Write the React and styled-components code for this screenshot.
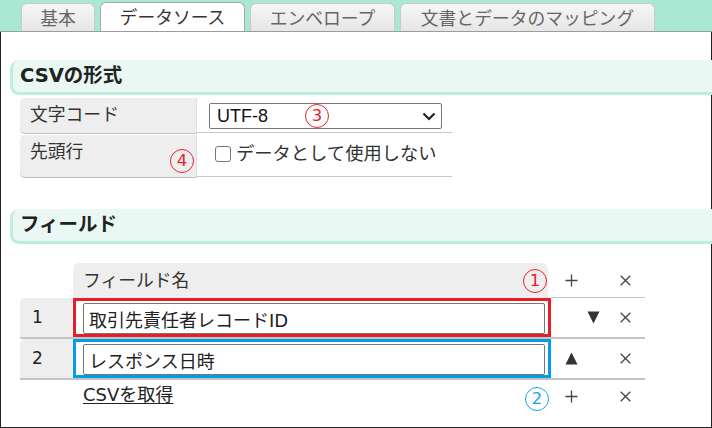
import React from "react";
import styled, { createGlobalStyle } from "styled-components";

const GlobalStyle = createGlobalStyle`
  html, body {
    margin: 0;
    padding: 0;
    background: #fff;
  }
  body {
    font-family: "DejaVu Sans", "Noto Sans CJK JP", sans-serif;
    color: #333;
  }
`;

const Page = styled.div`
  width: 712px;
  height: 428px;
  display: flex;
  flex-direction: column;
  overflow: hidden;
`;

const TabBar = styled.div`
  flex: none;
  height: 31px;
  background: #a9e9d4;
  border-bottom: 1px solid #9c9c9c;
  display: flex;
  align-items: flex-end;
  gap: 5px;
  padding-left: 21px;
`;

const Tab = styled.div`
  width: ${(p) => p.$w}px;
  height: ${(p) => (p.$active ? 29 : 28)}px;
  box-sizing: border-box;
  border: 1px solid ${(p) => (p.$active ? "#a9a9a9" : "#cacaca")};
  border-bottom: none;
  border-radius: 6px 6px 0 0;
  background: ${(p) => (p.$active ? "#fff" : "linear-gradient(#f6f6f6, #e6e6e6)")};
  color: ${(p) => (p.$active ? "#333" : "#666")};
  font-family: "Noto Sans CJK JP", sans-serif;
  font-size: 17.8px;
  line-height: 26px;
  text-align: center;
`;

const Content = styled.div`
  flex: 1;
  border: 1px solid #222;
  border-top: none;
  padding: 28px 0 0 9px;
`;

const SectionHeader = styled.h2`
  margin: ${(p) => p.$top || 0}px -1px 0 0;
  height: 35px;
  box-sizing: border-box;
  background: #eaf8f3;
  border-left: 3px solid #bdeedd;
  border-bottom: 3px solid #bdeedd;
  border-radius: 9px 0 0 9px;
  padding-left: 7px;
  font-size: 19.5px;
  font-weight: bold;
  color: #222;
  line-height: 32px;
`;

const FormTable = styled.div`
  margin: 3px 0 0 10px;
  width: 432px;
  display: flex;
  flex-direction: column;
  gap: 2px;
`;

const FormRow = styled.div`
  display: grid;
  grid-template-columns: 177px 255px;
  height: ${(p) => p.$h}px;
`;

const FormLabel = styled.div`
  position: relative;
  background: #eeeeee;
  border-radius: 5px 0 0 5px;
  border-right: 1px solid #dedede;
  box-shadow: 0 1px 0 #c2c2c2;
  padding: 4px 10px 0;
  font-size: 17.8px;
  line-height: 26px;
  color: #333;
`;

const FormValue = styled.div`
  border-bottom: 1px solid #c8c8c8;
  padding: ${(p) => p.$pad};
`;

const SelectWrap = styled.div`
  position: relative;
  width: 233px;
  height: 26px;
`;

const Select = styled.select`
  appearance: none;
  width: 100%;
  height: 100%;
  box-sizing: border-box;
  border: 1px solid #767676;
  border-radius: 2px;
  background: #fff;
  padding: 0 0 0 7px;
  font-family: "Liberation Sans", sans-serif;
  font-size: 18px;
  color: #111;
`;

const Chevron = styled.svg`
  position: absolute;
  right: 6px;
  top: 9px;
  pointer-events: none;
`;

const CheckLabel = styled.label`
  display: flex;
  align-items: center;
  gap: 5px;
  font-size: 18.3px;
  line-height: 26px;
  color: #333;
`;

const Check = styled.input`
  appearance: none;
  margin: 0;
  width: 16px;
  height: 16px;
  box-sizing: border-box;
  border: 1.5px solid #777;
  border-radius: 3px;
  background: #fff;
`;

const Mark = styled.span`
  position: absolute;
  left: ${(p) => p.$x}px;
  top: ${(p) => p.$y}px;
  width: 24px;
  height: 24px;
  box-sizing: border-box;
  border: 1.3px solid ${(p) => p.$color};
  border-radius: 50%;
  color: ${(p) => p.$color};
  font-family: "DejaVu Sans", sans-serif;
  font-size: 16.5px;
  line-height: 22px;
  text-align: center;
`;

const FieldTable = styled.div`
  margin: 19px 0 0 10px;
  width: 625px;
`;

const GridRow = styled.div`
  display: grid;
  grid-template-columns: 53px 478px 54px 40px;
  height: ${(p) => p.$h}px;
  box-sizing: border-box;
  border-bottom: ${(p) => (p.$line ? "2px solid #c4c4c4" : "none")};
`;

const NameHead = styled.div`
  position: relative;
  margin-right: 3px;
  background: #eeeeee;
  border-radius: 6px 6px 0 0;
  padding-left: 10px;
  font-size: 17.8px;
  line-height: 35px;
  color: #333;
`;

const HeadSide = styled.div`
  display: flex;
  align-items: center;
  justify-content: ${(p) => (p.$center ? "center" : "flex-start")};
  padding-left: ${(p) => (p.$center ? 0 : 9)}px;
  border-bottom: 1px solid #c4c4c4;
`;

const NumCell = styled.div`
  margin-right: 1px;
  background: #eeeeee;
  border-radius: 5px 0 0 0;
  padding-left: 12px;
  font-size: 17px;
  line-height: 39px;
  color: #222;
`;

const NameCell = styled.div`
  box-sizing: border-box;
  border: 3px solid ${(p) => p.$color};
  padding: 2px 3px 0 7px;
`;

const TextInput = styled.input`
  display: block;
  width: 100%;
  height: 31px;
  box-sizing: border-box;
  margin: 0;
  border: 1px solid #767676;
  border-radius: 2px;
  padding: 0 5px;
  font-family: "DejaVu Sans", "Noto Sans CJK JP", sans-serif;
  font-size: 18px;
  color: #222;
  background: #fff;
`;

const Side = styled.div`
  display: flex;
  align-items: center;
  justify-content: ${(p) => (p.$center ? "center" : "flex-start")};
  padding-left: ${(p) => (p.$center ? 0 : 9)}px;
`;

const Slot = styled.span`
  width: 22px;
  display: flex;
  justify-content: center;
  align-items: center;
`;

const FootName = styled.div`
  position: relative;
  padding-left: 10px;
  line-height: 30px;
`;

const Link = styled.a`
  font-size: 18px;
  color: #222;
  text-decoration: underline;
  text-underline-offset: 2px;
`;

const Plus = () => (
  <svg width="13" height="13" viewBox="0 0 13 13">
    <path d="M6.5 0.5v12M0.5 6.5h12" stroke="#444" strokeWidth="1.3" />
  </svg>
);

const Times = () => (
  <svg width="11" height="11" viewBox="0 0 11 11">
    <path d="M0.7 0.7l9.6 9.6M10.3 0.7l-9.6 9.6" stroke="#444" strokeWidth="1.3" />
  </svg>
);

const Down = () => (
  <svg width="13" height="13" viewBox="0 0 13 13">
    <path d="M0.5 0.5h12l-6 12z" fill="#333" />
  </svg>
);

const Up = () => (
  <svg width="13" height="13" viewBox="0 0 13 13">
    <path d="M0.5 12.5h12l-6-12z" fill="#333" />
  </svg>
);

const RED = "#e8222b";
const BLUE = "#1aa3e8";

const tabs = [
  { label: "基本", w: 74 },
  { label: "データソース", w: 145, active: true },
  { label: "エンベロープ", w: 145 },
  { label: "文書とデータのマッピング", w: 255 },
];

const fields = [
  { no: 1, name: "取引先責任者レコードID", color: "#e81e26", arrow: "down" },
  { no: 2, name: "レスポンス日時", color: "#00a0e9", arrow: "up" },
];

export default function App() {
  return (
    <>
      <GlobalStyle />
      <Page>
        <TabBar>
          {tabs.map((t) => (
            <Tab key={t.label} $w={t.w} $active={t.active}>
              {t.label}
            </Tab>
          ))}
        </TabBar>
        <Content>
          <SectionHeader>CSVの形式</SectionHeader>
          <FormTable>
            <FormRow $h={35}>
              <FormLabel>文字コード</FormLabel>
              <FormValue $pad="5px 0 0 12px">
                <SelectWrap>
                  <Select defaultValue="UTF-8">
                    <option>UTF-8</option>
                    <option>Shift_JIS</option>
                  </Select>
                  <Chevron width="14" height="9" viewBox="0 0 14 9">
                    <path d="M1.5 1.5l5.5 5.5 5.5-5.5" fill="none" stroke="#222" strokeWidth="2.2" />
                  </Chevron>
                  <Mark $x={96} $y={1} $color={RED}>3</Mark>
                </SelectWrap>
              </FormValue>
            </FormRow>
            <FormRow $h={42}>
              <FormLabel>
                先頭行
                <Mark $x={150} $y={14} $color={RED}>4</Mark>
              </FormLabel>
              <FormValue $pad="6px 0 0 18px">
                <CheckLabel>
                  <Check type="checkbox" />
                  データとして使用しない
                </CheckLabel>
              </FormValue>
            </FormRow>
          </FormTable>

          <SectionHeader $top={32}>フィールド</SectionHeader>
          <FieldTable>
            <GridRow $h={35}>
              <div />
              <NameHead>
                フィールド名
                <Mark $x={450} $y={6} $color={RED}>1</Mark>
              </NameHead>
              <HeadSide>
                <Slot>
                  <Plus />
                </Slot>
              </HeadSide>
              <HeadSide $center>
                <Times />
              </HeadSide>
            </GridRow>
            {fields.map((f) => (
              <GridRow key={f.no} $h={41} $line>
                <NumCell>{f.no}</NumCell>
                <NameCell $color={f.color}>
                  <TextInput defaultValue={f.name} />
                </NameCell>
                <Side>
                  <Slot>{f.arrow === "up" && <Up />}</Slot>
                  <Slot>{f.arrow === "down" && <Down />}</Slot>
                </Side>
                <Side $center>
                  <Times />
                </Side>
              </GridRow>
            ))}
            <GridRow $h={32}>
              <div />
              <FootName>
                <Link href="#">CSVを取得</Link>
                <Mark $x={452} $y={7} $color={BLUE}>2</Mark>
              </FootName>
              <Side>
                <Slot>
                  <Plus />
                </Slot>
              </Side>
              <Side $center>
                <Times />
              </Side>
            </GridRow>
          </FieldTable>
        </Content>
      </Page>
    </>
  );
}
